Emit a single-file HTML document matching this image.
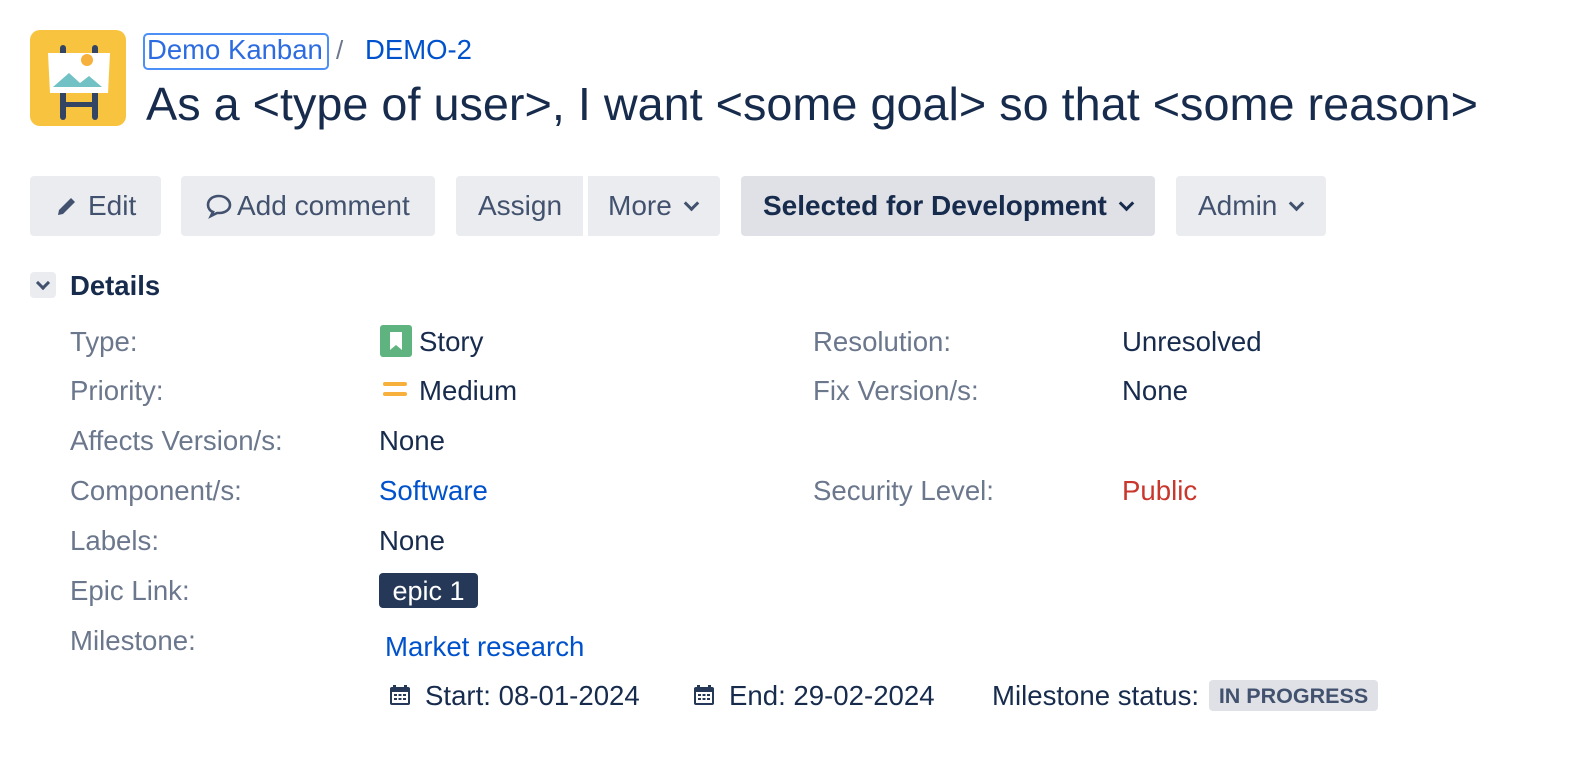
<!DOCTYPE html>
<html><head><meta charset="utf-8"><style>
body{margin:0;width:1572px;height:764px;background:#fff;font-family:"Liberation Sans",sans-serif;color:#172b4d;position:relative;overflow:hidden}
.a{position:absolute;white-space:nowrap}
.btn{position:absolute;top:176px;height:60px;background:#ebecf0;border-radius:4px;font-size:28px;line-height:60px;color:#42526e;box-sizing:border-box;white-space:nowrap}
.l{position:absolute;font-size:27.6px;color:#6b778c;line-height:30px;white-space:nowrap}
.v{position:absolute;font-size:27.6px;color:#172b4d;line-height:30px;white-space:nowrap}
.chev{display:inline-block;width:8px;height:8px;border-right:3px solid #42526e;border-bottom:3px solid #42526e;transform:rotate(45deg);margin-left:14px;position:relative;top:-6px}
</style></head><body>
<svg class="a" style="left:30px;top:30px" width="96" height="96" viewBox="0 0 96 96">
<rect width="96" height="96" rx="10" fill="#f8c440"/>
<rect x="30" y="15" width="6" height="12" rx="3" fill="#344563"/><rect x="62" y="15" width="6" height="12" rx="3" fill="#344563"/>
<rect x="30" y="60" width="6" height="30" rx="3" fill="#344563"/><rect x="62" y="60" width="6" height="30" rx="3" fill="#344563"/>
<rect x="32" y="72" width="34" height="5" fill="#344563"/>
<path d="M18 23 L80 23 L78 63 L20 63 Z" fill="#fff"/>
<circle cx="57" cy="30" r="6" fill="#f6b03b"/>
<path d="M23 57 L39 43 L50 53 L59 46 L72 57 Z" fill="#72c2c5"/>
</svg>
<div class="a" style="left:143px;top:33px;width:182px;height:33px;border:2px solid #4c8ff7;border-radius:5px;"></div>
<div class="a" style="left:147px;top:34px;font-size:27.5px;line-height:32px;color:#2d6ce0">Demo Kanban</div>
<div class="a" style="left:336px;top:34px;font-size:26px;line-height:32px;color:#6b778c">/</div>
<div class="a" style="left:365px;top:34px;font-size:27.5px;line-height:32px;color:#0052cc">DEMO-2</div>
<div class="a" style="left:146px;top:77px;font-size:46.8px;line-height:54px;color:#172b4d">As a &lt;type of user&gt;, I want &lt;some goal&gt; so that &lt;some reason&gt;</div>

<div class="btn" style="left:30px;width:131px;padding-left:24px"><svg width="26" height="24" viewBox="0 0 24 24" style="vertical-align:-3px;margin-right:8px"><path d="M3 21 L4 16 L16 4 L20 8 L8 20 Z" fill="#42526e"/></svg>Edit</div>
<div class="btn" style="left:181px;width:254px;padding-left:24px"><svg width="28" height="26" viewBox="0 0 28 26" style="vertical-align:-4px;margin-right:4px"><path d="M14 3C7 3 3 7 3 12c0 3 2 6 5 7l-2 4 6-3c1 0 1 0 2 0 7 0 11-4 11-8S21 3 14 3z" fill="none" stroke="#42526e" stroke-width="2.6"/></svg>Add comment</div>
<div class="btn" style="left:456px;width:127px;padding-left:22px;border-radius:4px 0 0 4px">Assign</div>
<div class="btn" style="left:588px;width:132px;padding-left:20px;border-radius:0 4px 4px 0">More<span class="chev"></span></div>
<div class="btn" style="left:741px;width:414px;padding-left:22px;background:#dfe1e6;color:#172b4d;font-weight:bold">Selected for Development<span class="chev" style="border-color:#172b4d"></span></div>
<div class="btn" style="left:1176px;width:150px;padding-left:22px">Admin<span class="chev"></span></div>

<div class="a" style="left:30px;top:272px;width:26px;height:26px;background:#ebecf0;border-radius:4px"><span class="chev" style="margin-left:8px;top:3px;border-color:#42526e;width:7px;height:7px"></span></div>
<div class="a" style="left:70px;top:271px;font-size:27.5px;font-weight:bold;line-height:30px">Details</div>

<div class="l" style="left:70px;top:327px">Type:</div>
<div class="l" style="left:70px;top:376px">Priority:</div>
<div class="l" style="left:70px;top:426px">Affects Version/s:</div>
<div class="l" style="left:70px;top:476px">Component/s:</div>
<div class="l" style="left:70px;top:526px">Labels:</div>
<div class="l" style="left:70px;top:576px">Epic Link:</div>
<div class="l" style="left:70px;top:626px">Milestone:</div>

<svg class="a" style="left:380px;top:325px" width="32" height="32" viewBox="0 0 32 32"><rect width="32" height="32" rx="3" fill="#5eb37f"/><path d="M10 7h12v18l-6-5-6 5z" fill="#fff"/></svg>
<div class="v" style="left:419px;top:327px">Story</div>
<svg class="a" style="left:383px;top:380px" width="24" height="20"><rect x="0" y="2" width="24" height="4" rx="2" fill="#f6b03b"/><rect x="0" y="12" width="24" height="4" rx="2" fill="#f6b03b"/></svg>
<div class="v" style="left:419px;top:376px">Medium</div>
<div class="v" style="left:379px;top:426px">None</div>
<div class="v" style="left:379px;top:476px;color:#0052cc">Software</div>
<div class="v" style="left:379px;top:526px">None</div>
<div class="a" style="left:379px;top:573px;width:99px;height:35px;background:#253858;border-radius:4px;color:#fff;font-size:27px;line-height:36px;text-align:center">epic 1</div>
<div class="v" style="left:385px;top:632px;color:#0052cc">Market research</div>

<svg class="a" style="left:388px;top:683px" width="24" height="24" viewBox="0 0 24 24"><rect x="2" y="4" width="20" height="18" rx="2" fill="#253858"/><rect x="5" y="2" width="3" height="5" fill="#253858"/><rect x="16" y="2" width="3" height="5" fill="#253858"/><rect x="4" y="9" width="16" height="11" fill="#fff"/><g fill="#253858"><rect x="6" y="11" width="3" height="2"/><rect x="10.5" y="11" width="3" height="2"/><rect x="15" y="11" width="3" height="2"/><rect x="6" y="15" width="3" height="2"/><rect x="10.5" y="15" width="3" height="2"/><rect x="15" y="15" width="3" height="2"/></g></svg>
<div class="v" style="left:425px;top:681px">Start: 08-01-2024</div>
<svg class="a" style="left:692px;top:683px" width="24" height="24" viewBox="0 0 24 24"><rect x="2" y="4" width="20" height="18" rx="2" fill="#253858"/><rect x="5" y="2" width="3" height="5" fill="#253858"/><rect x="16" y="2" width="3" height="5" fill="#253858"/><rect x="4" y="9" width="16" height="11" fill="#fff"/><g fill="#253858"><rect x="6" y="11" width="3" height="2"/><rect x="10.5" y="11" width="3" height="2"/><rect x="15" y="11" width="3" height="2"/><rect x="6" y="15" width="3" height="2"/><rect x="10.5" y="15" width="3" height="2"/><rect x="15" y="15" width="3" height="2"/></g></svg>
<div class="v" style="left:729px;top:681px">End: 29-02-2024</div>
<div class="v" style="left:992px;top:681px">Milestone status:</div>
<div class="a" style="left:1209px;top:680px;width:169px;height:31px;background:#dfe1e6;border-radius:4px;color:#42526e;font-size:21.5px;font-weight:bold;line-height:32px;text-align:center">IN PROGRESS</div>

<div class="l" style="left:813px;top:327px">Resolution:</div>
<div class="l" style="left:813px;top:376px">Fix Version/s:</div>
<div class="l" style="left:813px;top:476px">Security Level:</div>
<div class="v" style="left:1122px;top:327px">Unresolved</div>
<div class="v" style="left:1122px;top:376px">None</div>
<div class="v" style="left:1122px;top:476px;color:#c9372c">Public</div>
</body></html>
